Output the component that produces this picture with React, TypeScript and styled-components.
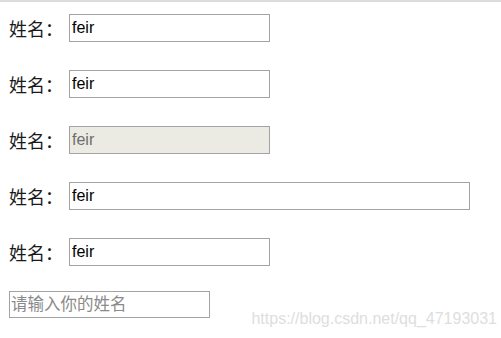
import React from 'react'
import styled, { createGlobalStyle } from 'styled-components'

const GlobalStyle = createGlobalStyle`
  html, body {
    margin: 0;
    padding: 0;
    background: #fff;
  }
  body {
    font-family: "Liberation Sans", "Noto Sans CJK SC", sans-serif;
  }
`

const Page = styled.div`
  position: relative;
  width: 501px;
  height: 338px;
  overflow: hidden;
  border-top: 2px solid #dcdcdc;
  box-sizing: border-box;
  padding: 12px 0 0 9px;
`

const Row = styled.div`
  display: flex;
  align-items: center;
  height: 28px;
  margin-bottom: 28px;
`

const Label = styled.label`
  font-family: "Noto Sans CJK SC", sans-serif;
  font-size: 18px;
  color: #1a1a1a;
  width: 60px;
  line-height: 28px;
`

const Input = styled.input<{ $wide?: boolean }>`
  box-sizing: border-box;
  width: ${p => (p.$wide ? '401px' : '201px')};
  height: 28px;
  margin: 0;
  padding: 0 2px;
  border: 1px solid #a3a3a3;
  border-radius: 0;
  outline: none;
  font-family: "Liberation Sans", "Noto Sans CJK SC", sans-serif;
  font-size: 16px;
  color: #000;
  background: #fff;

  &:disabled {
    background: #ebebe4;
    color: #6d6d6d;
  }

  &::placeholder {
    font-family: "Noto Sans CJK SC", sans-serif;
    font-size: 16.5px;
    color: #8a8a8a;
    opacity: 1;
  }
`

const PlainInput = styled(Input)`
  width: 201px;
  height: 27px;
  margin-top: -7px;
  padding-left: 1px;
`

const Watermark = styled.div`
  position: absolute;
  right: 4px;
  bottom: 10px;
  font-family: "Liberation Sans", sans-serif;
  font-size: 16px;
  color: #dedede;
  pointer-events: none;
`

export default function App() {
  return (
    <>
      <GlobalStyle />
      <Page>
        <Row>
          <Label>姓名：</Label>
          <Input defaultValue="feir" />
        </Row>
        <Row>
          <Label>姓名：</Label>
          <Input defaultValue="feir" readOnly />
        </Row>
        <Row>
          <Label>姓名：</Label>
          <Input defaultValue="feir" disabled />
        </Row>
        <Row>
          <Label>姓名：</Label>
          <Input defaultValue="feir" $wide />
        </Row>
        <Row>
          <Label>姓名：</Label>
          <Input defaultValue="feir" />
        </Row>
        <Row>
          <PlainInput placeholder="请输入你的姓名" />
        </Row>
        <Watermark>https://blog.csdn.net/qq_47193031</Watermark>
      </Page>
    </>
  )
}
